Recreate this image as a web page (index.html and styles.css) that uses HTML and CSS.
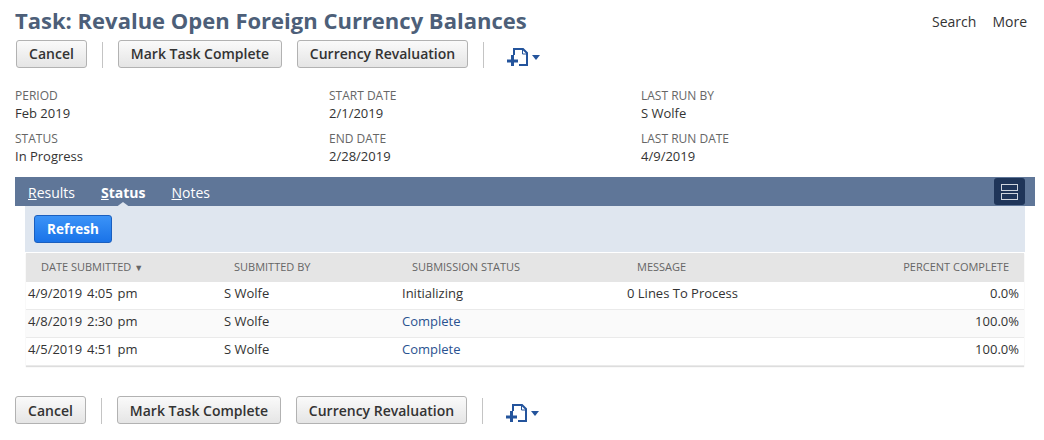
FILE: index.html
```html
<!DOCTYPE html>
<html lang="en">
<head>
<meta charset="utf-8">
<title>Task</title>
<link rel="stylesheet" href="styles.css">
</head>
<body>
<div class="page">
  <header class="head">
    <h1>Task: Revalue Open Foreign Currency Balances</h1>
    <nav class="links"><span>Search</span><span>More</span></nav>
  </header>
  <div class="toolbar top">
    <button class="btn cancel">Cancel</button>
    <i class="sep"></i>
    <button class="btn mark">Mark Task Complete</button>
    <button class="btn reval">Currency Revaluation</button>
    <i class="sep last"></i>
    <svg class="newdoc" width="34" height="20" viewBox="0 0 34 20"><path d="M7 8V2H16L20 6V18H12" fill="none" stroke="#24549c" stroke-width="2"/><path d="M15.500 2v5h5" fill="none" stroke="#24549c" stroke-width="1"/><path d="M0 14h11M5.500 8v11" fill="none" stroke="#24549c" stroke-width="3"/><path d="M25 8h8l-4 5z" fill="#24549c"/></svg>
  </div>
  <section class="fields">
    <div class="col c1">
      <div class="field"><label>PERIOD</label><p>Feb 2019</p></div>
      <div class="field"><label>STATUS</label><p>In Progress</p></div>
    </div>
    <div class="col c2">
      <div class="field"><label>START DATE</label><p>2/1/2019</p></div>
      <div class="field"><label>END DATE</label><p>2/28/2019</p></div>
    </div>
    <div class="col c3">
      <div class="field"><label>LAST RUN BY</label><p>S Wolfe</p></div>
      <div class="field"><label>LAST RUN DATE</label><p>4/9/2019</p></div>
    </div>
  </section>
  <div class="tabs">
    <span class="tab"><u>R</u>esults</span>
    <span class="tab active"><u>S</u>tatus</span>
    <span class="tab"><u>N</u>otes</span>
    <span class="layout"><b></b><b></b></span>
  </div>
  <div class="panel">
    <div class="action"><button class="refresh">Refresh</button></div>
    <table>
      <thead><tr><th class="d">DATE SUBMITTED <small>▼</small></th><th class="b">SUBMITTED BY</th><th class="s">SUBMISSION STATUS</th><th class="m">MESSAGE</th><th class="p">PERCENT COMPLETE</th></tr></thead>
      <tbody>
        <tr><td>4/9/2019 4:05 pm</td><td>S Wolfe</td><td>Initializing</td><td>0 Lines To Process</td><td class="p">0.0%</td></tr>
        <tr><td>4/8/2019 2:30 pm</td><td>S Wolfe</td><td><a>Complete</a></td><td></td><td class="p">100.0%</td></tr>
        <tr><td>4/5/2019 4:51 pm</td><td>S Wolfe</td><td><a>Complete</a></td><td></td><td class="p">100.0%</td></tr>
      </tbody>
    </table>
  </div>
  <div class="toolbar bottom">
    <button class="btn cancel">Cancel</button>
    <i class="sep"></i>
    <button class="btn mark">Mark Task Complete</button>
    <button class="btn reval">Currency Revaluation</button>
    <i class="sep last"></i>
    <svg class="newdoc" width="34" height="20" viewBox="0 0 34 20"><path d="M7 8V2H16L20 6V18H12" fill="none" stroke="#24549c" stroke-width="2"/><path d="M15.500 2v5h5" fill="none" stroke="#24549c" stroke-width="1"/><path d="M0 14h11M5.500 8v11" fill="none" stroke="#24549c" stroke-width="3"/><path d="M25 8h8l-4 5z" fill="#24549c"/></svg>
  </div>
</div>
</body>
</html>
```

FILE: styles.css
```css
* { box-sizing: border-box; }
html, body { margin: 0; padding: 0; background: #fff; }
body { width: 1044px; height: 440px; overflow: hidden; font-family: "Open Sans", sans-serif; font-size: 13px; color: #333; }
.page { padding: 0 17px 0 15px; }
.head { display: flex; justify-content: space-between; height: 40px; align-items: flex-start; }
h1 { margin: 6px 0 0; font-size: 22px; line-height: 28px; font-weight: 700; color: #4d5f79; }
.links { display: flex; gap: 16px; font-size: 14px; line-height: 20px; margin-top: 12px; color: #333; }
.toolbar { display: flex; align-items: flex-start; }
.toolbar.top { padding-left: 1px; height: 47px; }
.toolbar.bottom { margin-top: 30px; }
.btn { height: 28px; padding: 0 0 2px; border: 1px solid #b2b2b2; border-radius: 3px; background: linear-gradient(#fafafa, #e5e5e5); font: 600 14px "Open Sans", sans-serif; color: #333; }
.bottom .btn { padding-bottom: 0; }
.cancel { width: 71px; }
.mark { width: 164px; margin-right: 15px; }
.reval { width: 171px; }
.sep { width: 1px; height: 26px; margin: 2px 15px 0 15px; background: #c4c4c4; }
.sep.last { margin: 2px 23px 0 15px; }
.newdoc { margin-top: 7px; }
.fields { display: flex; height: 90px; }
.c1 { width: 314px; }
.c2 { width: 312px; }
.field { height: 43px; }
label { display: block; font-size: 12px; line-height: 18px; color: #666; }
.field p { margin: -1px 0 0; line-height: 18px; font-size: 13px; color: #333; }
.tabs { position: relative; display: flex; align-items: center; height: 29px; width: 1020px; background: #5f7698; color: #fff; font-size: 14px; padding: 2px 0 0 13px; }
.tab { margin-right: 26px; }
.tab.active { font-weight: 700; position: relative; }
.tab.active::after { content: ""; position: absolute; left: 50%; margin-left: -8px; bottom: -6px; border: 8px solid transparent; border-top: 0; border-bottom: 6px solid #dfe6ef; }
.layout { position: absolute; right: 10px; top: 1px; width: 31px; height: 27px; background: #1f3559; border-radius: 3px; display: flex; flex-direction: column; gap: 2px; align-items: center; justify-content: center; }
.layout b { display: block; width: 17px; height: 7px; border: 1px solid #cfd5de; }
.panel { margin-left: 10px; width: 1000px; }
.action { height: 46px; background: #dfe6ef; padding: 9px 0 0 9px; }
.refresh { display: block; width: 78px; height: 28px; padding: 0 0 1px; border: 1px solid #1a5fbf; border-radius: 3px; background: linear-gradient(#3b93f7, #1a73e8); font: 700 13.500px "Open Sans", sans-serif; color: #fff; }
table { width: 998px; border-collapse: separate; border-spacing: 0; table-layout: fixed; margin: 1px 0 0 1px; box-shadow: 0 1px 1px #ddd; }
th { height: 29px; background: #e5e5e5; font-size: 11px; font-weight: 400; color: #666; text-align: left; padding: 0 0 2px 10px; white-space: nowrap; }
th small { font-size: 9px; }
td { height: 28px; padding: 2px 0 0; vertical-align: top; line-height: 18px; font-size: 13px; color: #333; border-bottom: 1px solid #eaeaea; }
tbody tr:nth-child(2) td { background: #fafafa; }
th.d { width: 198px; padding-left: 15px; }
th.b { width: 178px; }
th.s { width: 225px; }
th.m { width: 220px; }
th.p { text-align: right; padding: 0 15px 2px 0; }
td.p { text-align: right; padding-right: 5px; }
td:first-child { padding-left: 2px; word-spacing: 1.500px; }
a { color: #2a5290; }
```
